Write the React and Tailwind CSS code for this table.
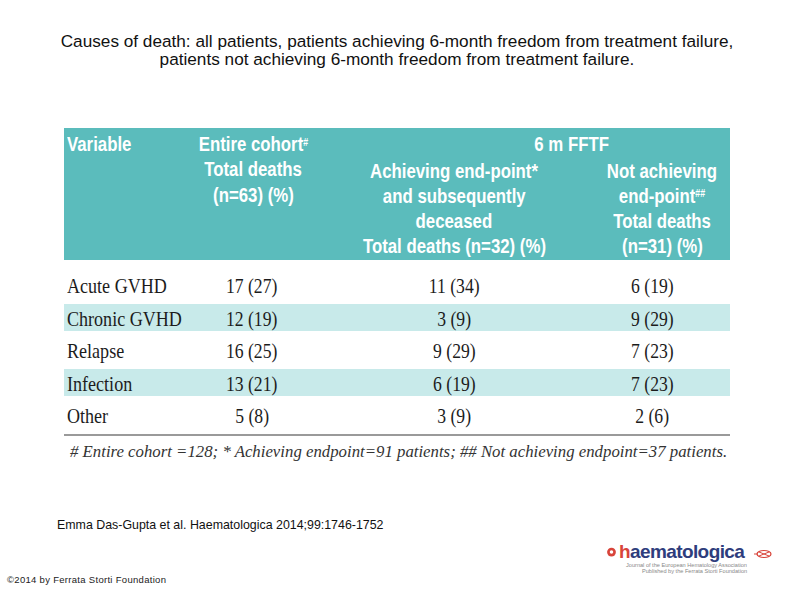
import React from 'react';

const rows = [
    { name: 'Acute GVHD', a: '17 (27)', b: '11 (34)', c: '6 (19)', band: false },
    { name: 'Chronic GVHD', a: '12 (19)', b: '3 (9)', c: '9 (29)', band: true },
    { name: 'Relapse', a: '16 (25)', b: '9 (29)', c: '7 (23)', band: false },
    { name: 'Infection', a: '13 (21)', b: '6 (19)', c: '7 (23)', band: true },
    { name: 'Other', a: '5 (8)', b: '3 (9)', c: '2 (6)', band: false },
];

const serif = { fontFamily: '"Liberation Serif", serif' };
const sans = { fontFamily: '"Liberation Sans", Arial, sans-serif' };

// one squeezed header line
function H({ children, left = false }) {
    return (
        <div className={`flex ${left ? 'justify-start' : 'justify-center'} h-[25.3px]`}>
            <span className={`inline-block whitespace-nowrap scale-x-[0.8] ${left ? 'origin-left' : ''}`}>{children}</span>
        </div>
    );
}

function Cell({ children, className = '' }) {
    return (
        <div className={`flex items-center justify-center ${className}`}>
            <span className="inline-block scale-x-[0.84] whitespace-nowrap">{children}</span>
        </div>
    );
}

export default function App() {
    return (
        <div className="w-[794px] h-[595px] bg-white relative overflow-hidden text-black" style={sans}>
            <h1 className="pt-[32px] text-center text-[17.2px] leading-[18px] text-[#111] whitespace-nowrap">
                Causes of death: all patients, patients achieving 6-month freedom from treatment failure,
                <br />
                patients not achieving 6-month freedom from treatment failure.
            </h1>

            <div className="ml-[64px] mt-[60px] w-[666px]">
                {/* header */}
                <div className="bg-[#5bbcbc] h-[132px] pt-[3px] text-white font-bold text-[21px] leading-[25.3px] grid grid-cols-[126px_120px_288px_132px]" style={sans}>
                    <div className="pl-[3px]">
                        <H left>Variable</H>
                    </div>
                    <div className="pl-[6px]">
                        <H>Entire cohort<sup className="text-[11px]">#</sup></H>
                        <H>Total deaths</H>
                        <H>(n=63) (%)</H>
                    </div>
                    <div className="col-span-2 grid grid-cols-[288px_132px]">
                        <div className="col-span-2 pl-[104px]">
                            <H>6 m FFTF</H>
                        </div>
                        <div>
                            <H>Achieving end-point*</H>
                            <H>and subsequently</H>
                            <H>deceased</H>
                            <H>Total deaths (n=32) (%)</H>
                        </div>
                        <div className="pr-[4px]">
                            <H>Not achieving</H>
                            <H>end-point<sup className="text-[11px]">##</sup></H>
                            <H>Total deaths</H>
                            <H>(n=31) (%)</H>
                        </div>
                    </div>
                </div>

                {/* body */}
                <div className="mt-[11px] flex flex-col gap-[5.5px] text-[21px] text-[#1c1c1c]" style={serif}>
                    {rows.map(r => (
                        <div
                            key={r.name}
                            className={`h-[27px] grid grid-cols-[126px_120px_288px_132px] ${r.band ? 'bg-[#c8eaea]' : ''}`}
                        >
                            <div className="flex items-center pl-[3px]">
                                <span className="inline-block scale-x-[0.86] origin-left whitespace-nowrap">{r.name}</span>
                            </div>
                            <Cell className="pl-[4px]">{r.a}</Cell>
                            <Cell>{r.b}</Cell>
                            <Cell className="pr-[24px]">{r.c}</Cell>
                        </div>
                    ))}
                </div>

                <div className="mt-[6px] h-[2px] bg-[#9a9a9a]" />
                <p className="mt-[6px] pl-[6px] italic text-[16.8px] leading-[20px] text-[#333] whitespace-nowrap" style={serif}>
                    # Entire cohort =128; * Achieving endpoint=91 patients; ## Not achieving endpoint=37 patients.
                </p>
            </div>

            <p className="absolute left-[57px] top-[516px] text-[12.4px] text-[#111]">
                Emma Das-Gupta et al. Haematologica 2014;99:1746-1752
            </p>
            <p className="absolute left-[7px] top-[573px] text-[9.5px] tracking-[0.3px] text-[#222]">
                ©2014 by Ferrata Storti Foundation
            </p>

            {/* logo */}
            <div className="absolute left-[606px] top-[541px] flex items-start">
                <div className="flex flex-col">
                    <div className="flex items-center gap-[2px]">
                        <svg width="11" height="11" viewBox="0 0 10 10">
                            <circle cx="5" cy="5.5" r="4" fill="#d8443a" />
                            <circle cx="5" cy="5.5" r="1.6" fill="#fff" />
                        </svg>
                        <span className="text-[19px] leading-[21px] font-bold tracking-[-0.6px]">
                            <span className="text-[#d8443a]">h</span>
                            <span className="text-[#2e3d7c]">aematologica</span>
                        </span>
                    </div>
                    <div className="pl-[20px] text-[5.6px] leading-[6px] text-[#888] whitespace-nowrap">
                        Journal of the European Hematology Association
                        <br />
                        <span className="pl-[16px]">Published by the Ferrata Storti Foundation</span>
                    </div>
                </div>
                <svg width="20" height="10" viewBox="0 0 20 10" className="mt-[8px] ml-[6px]">
                    <ellipse cx="11" cy="5" rx="7" ry="3.5" fill="none" stroke="#d8443a" strokeWidth="1.2" />
                    <path d="M1 5 H5 M6 3 L16 7 M6 7 L16 3" stroke="#d8443a" strokeWidth="1" />
                </svg>
            </div>
        </div>
    );
}
